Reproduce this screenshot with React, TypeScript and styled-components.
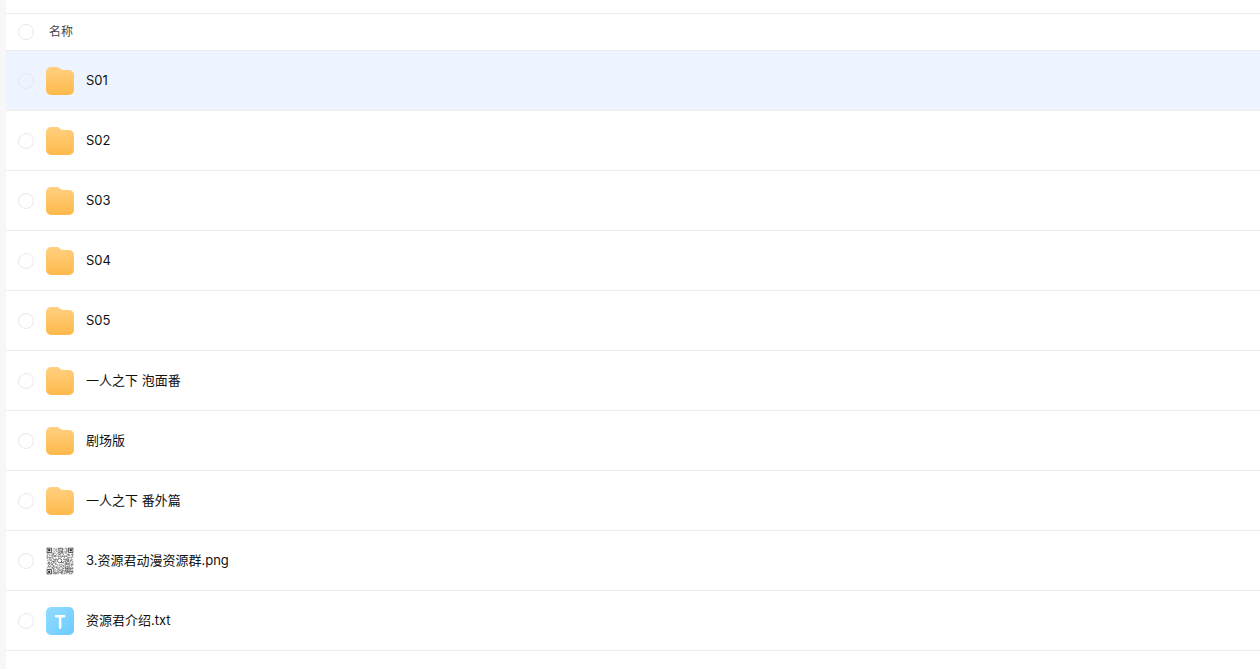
import React, { useState } from 'react';
import styled, { createGlobalStyle } from 'styled-components';

const GlobalStyle = createGlobalStyle`
  *, *::before, *::after { box-sizing: border-box; }
  body {
    margin: 0;
    background: #f7f7f7;
    color: #111;
    font: 13px/20px Inter, "Noto Sans CJK SC", sans-serif;
  }
`;

const Page = styled.div`
  min-height: 100vh;
  padding-left: 6px;
  display: flex;
`;

const Panel = styled.main`
  flex: 1;
  padding-top: 13px;
  background: #fff;
`;

const FileTable = styled.table`
  width: 100%;
  border-collapse: separate;
  border-spacing: 0;
  border-top: 1px solid #ededed;
`;

const HeadCell = styled.th`
  height: 37px;
  padding: 0 12px;
  border-bottom: 1px solid #ededed;
  text-align: left;
  font-size: 12px;
  font-weight: 400;
  color: #444;
`;

const HeadLine = styled.div`
  display: flex;
  align-items: center;
  gap: 15px;
`;

const Row = styled.tr<{ $active: boolean }>`
  background: ${(p) => (p.$active ? '#edf3ff' : '#fff')};
`;

const Cell = styled.td`
  height: 60px;
  padding: 1px 12px 0;
  border-bottom: 1px solid #ededed;
`;

const FileLine = styled.div`
  display: flex;
  align-items: center;
  gap: 12px;
`;

const Check = styled.input`
  appearance: none;
  width: 16px;
  height: 16px;
  margin: 0;
  border: 1px solid #e8e8e8;
  border-radius: 50%;
  flex: none;
  cursor: pointer;
  &:checked {
    border-color: #3b78ff;
    background: #3b78ff;
  }
`;

const Icon = styled.svg`
  display: block;
  width: 28px;
  height: 28px;
  flex: none;
`;

const FileName = styled.label`
  padding-bottom: 2px;
  cursor: pointer;
`;

type Kind = 'folder' | 'image' | 'text';

const files: { name: string; kind: Kind }[] = [
  { name: 'S01', kind: 'folder' },
  { name: 'S02', kind: 'folder' },
  { name: 'S03', kind: 'folder' },
  { name: 'S04', kind: 'folder' },
  { name: 'S05', kind: 'folder' },
  { name: '一人之下 泡面番', kind: 'folder' },
  { name: '剧场版', kind: 'folder' },
  { name: '一人之下 番外篇', kind: 'folder' },
  { name: '3.资源君动漫资源群.png', kind: 'image' },
  { name: '资源君介绍.txt', kind: 'text' },
];

function FolderIcon({ id }: { id: string }) {
  return (
    <Icon viewBox="0 0 28 28" aria-hidden="true">
      <defs>
        <linearGradient id={id} x1="0" y1="0" x2="0" y2="1">
          <stop offset="0" stopColor="#ffd080" />
          <stop offset="1" stopColor="#ffb94a" />
        </linearGradient>
      </defs>
      <path
        fill={`url(#${id})`}
        d="M5 0h5.500c1.300 0 2.200.4 3.100 1.200l1 .9c.6.6 1.200.9 2.200.9H23a5 5 0 0 1 5 5v15a5 5 0 0 1-5 5H5a5 5 0 0 1-5-5V5a5 5 0 0 1 5-5Z"
      />
    </Icon>
  );
}

function TextIcon({ id }: { id: string }) {
  return (
    <Icon viewBox="0 0 28 28" aria-hidden="true">
      <defs>
        <linearGradient id={id} x1="0" y1="0" x2="1" y2="1">
          <stop offset="0" stopColor="#92dcff" />
          <stop offset="1" stopColor="#6ccbff" />
        </linearGradient>
      </defs>
      <rect width="28" height="28" rx="5" fill={`url(#${id})`} />
      <path d="M10 9.300h8.200M14.100 9.300v11.500" stroke="#fff" strokeWidth="2.500" strokeLinecap="round" fill="none" />
    </Icon>
  );
}

const QR_SIZE = 37;

// Dark modules of the code: everything outside the three finders and the centre logo.
function qrModules(): string {
  let seed = 29;
  let d = '';
  for (let y = 0; y < QR_SIZE; y++) {
    for (let x = 0; x < QR_SIZE; x++) {
      seed = (seed * 1103515245 + 12345) % 2147483648;
      const inFinder = (x < 8 && y < 8) || (x > 28 && y < 8) || (x < 8 && y > 28);
      const inAlign = x > 27 && x < 33 && y > 27 && y < 33;
      const inLogo = Math.abs(x - 18) < 5 && Math.abs(y - 18) < 5;
      if (!inFinder && !inAlign && !inLogo && seed / 2147483648 < 0.52) d += `M${x} ${y}h1v1h-1z`;
    }
  }
  return d;
}

const modules = qrModules();

function QrIcon() {
  return (
    <Icon viewBox="-1 -1 39 39" aria-hidden="true">
      <rect x="-1" y="-1" width="39" height="39" fill="#fff" />
      <path d={modules} fill="#777" />
      {[[0, 0], [30, 0], [0, 30]].map(([x, y]) => (
        <g key={`${x}-${y}`} fill="#222">
          <path fillRule="evenodd" d={`M${x} ${y}h7v7h-7zM${x + 1} ${y + 1}v5h5v-5z`} />
          <rect x={x + 2} y={y + 2} width="3" height="3" />
        </g>
      ))}
      <path fillRule="evenodd" fill="#333" d="M28 28h5v5h-5zM29 29v3h3v-3zM30 30h1v1h-1z" />
      <circle cx="18" cy="18" r="3" fill="none" stroke="#555" strokeWidth="1.200" />
      <path d="M20 20.500l3 .5" stroke="#555" strokeWidth="1.200" />
    </Icon>
  );
}

function FileIcon({ kind, id }: { kind: Kind; id: string }) {
  if (kind === 'folder') return <FolderIcon id={id} />;
  if (kind === 'text') return <TextIcon id={id} />;
  return <QrIcon />;
}

export default function App() {
  const [checked, setChecked] = useState<string[]>([]);
  const [active, setActive] = useState('S01');
  const toggle = (name: string) =>
    setChecked((c) => (c.includes(name) ? c.filter((n) => n !== name) : [...c, name]));
  const all = checked.length === files.length;

  return (
    <>
      <GlobalStyle />
      <Page>
        <Panel>
          <FileTable>
            <thead>
              <tr>
                <HeadCell scope="col">
                  <HeadLine>
                    <Check
                      type="checkbox"
                      id="all"
                      checked={all}
                      onChange={() => setChecked(all ? [] : files.map((f) => f.name))}
                    />
                    <label htmlFor="all">名称</label>
                  </HeadLine>
                </HeadCell>
              </tr>
            </thead>
            <tbody>
              {files.map((f, i) => (
                <Row key={f.name} $active={f.name === active} onMouseEnter={() => setActive(f.name)}>
                  <Cell>
                    <FileLine>
                      <Check
                        type="checkbox"
                        id={`file-${i}`}
                        checked={checked.includes(f.name)}
                        onChange={() => toggle(f.name)}
                      />
                      <FileIcon kind={f.kind} id={`fill-${i}`} />
                      <FileName htmlFor={`file-${i}`}>{f.name}</FileName>
                    </FileLine>
                  </Cell>
                </Row>
              ))}
            </tbody>
          </FileTable>
        </Panel>
      </Page>
    </>
  );
}
